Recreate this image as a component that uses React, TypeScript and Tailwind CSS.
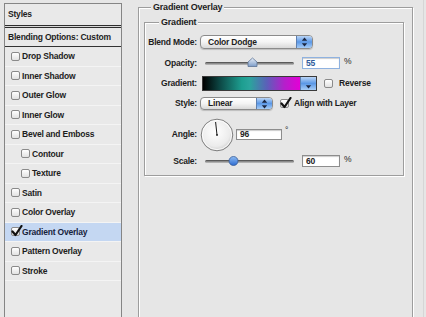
import React from 'react';

const layers: { label: string; nested?: boolean; checked?: boolean }[] = [
  { label: 'Drop Shadow' },
  { label: 'Inner Shadow' },
  { label: 'Outer Glow' },
  { label: 'Inner Glow' },
  { label: 'Bevel and Emboss' },
  { label: 'Contour', nested: true },
  { label: 'Texture', nested: true },
  { label: 'Satin' },
  { label: 'Color Overlay' },
  { label: 'Gradient Overlay', checked: true },
  { label: 'Pattern Overlay' },
  { label: 'Stroke' },
];

function CheckBox({ checked }: { checked?: boolean }) {
  return (
    <span className="relative block h-[9px] w-[9px] shrink-0 rounded-[2px] border border-[#8a8a8a] bg-gradient-to-b from-white to-[#e2e2e2]">
      {checked && (
        <svg className="absolute left-[-1px] top-[-3px]" width="12" height="12" viewBox="0 0 12 12">
          <path d="M1.5 6.5 L4.5 10 L10.5 1" fill="none" stroke="#111" strokeWidth="2.2" strokeLinecap="round" strokeLinejoin="round" />
        </svg>
      )}
    </span>
  );
}

function Stepper({ double }: { double?: boolean }) {
  return (
    <span className="flex h-full w-[16px] shrink-0 items-center justify-center border-l border-[#5d7fb0] bg-gradient-to-b from-[#b9d4f5] via-[#5b98e6] to-[#a6ccf6]">
      <svg width="7" height="10" viewBox="0 0 7 10">
        {double && <path d="M3.5 0.5 L6.2 3.8 L0.8 3.8 Z" fill="#1b2640" />}
        <path d="M0.8 6.2 L6.2 6.2 L3.5 9.5 Z" fill="#1b2640" />
      </svg>
    </span>
  );
}

function PopUp({ label, className }: { label: string; className: string }) {
  return (
    <div className={`flex items-stretch overflow-hidden rounded-[4px] border border-[#8b8b8b] bg-gradient-to-b from-white via-[#f4f4f4] to-[#d9d9d9] shadow-[0_1px_1px_rgba(0,0,0,0.18)] ${className}`}>
      <span className="flex flex-1 items-center pl-[7px] leading-none">{label}</span>
      <Stepper double />
    </div>
  );
}

function Slider({ thumbAt, round }: { thumbAt: number; round?: boolean }) {
  return (
    <div className="relative flex h-full w-[97px] shrink-0 items-center pl-[5px]">
      <div className="h-[3px] w-[89px] rounded-full border-t border-[#5a5a5a] bg-gradient-to-b from-[#7a7a7a] to-[#c4c4c4]" />
      <svg className="absolute top-[0px]" style={{ left: thumbAt }} width="11" height="11" viewBox="0 0 11 11">
        <defs>
          <linearGradient id={round ? 'tr' : 'to'} x1="0" y1="0" x2="0" y2="1">
            <stop offset="0" stopColor={round ? '#8fbdf4' : '#e6eef8'} />
            <stop offset="1" stopColor={round ? '#2c6ad0' : '#7d9cc8'} />
          </linearGradient>
        </defs>
        {round ? (
          <circle cx="5.5" cy="6" r="4.5" fill="url(#tr)" stroke="#3b5d96" strokeWidth="0.8" />
        ) : (
          <path d="M1 9.5 L1 5 L5.5 1 L10 5 L10 9.5 Z" fill="url(#to)" stroke="#5d7396" strokeWidth="0.8" />
        )}
      </svg>
    </div>
  );
}

function NumberField({ value, focus }: { value: string; focus?: boolean }) {
  return (
    <div
      className={`flex h-full w-[38px] shrink-0 items-center border bg-white pl-[3px] leading-none shadow-[inset_0_1px_1px_rgba(0,0,0,0.2)] ${
        focus ? 'border-[#8fb2e0] text-[#2f5a9a]' : 'border-[#8d8d8d]'
      }`}
    >
      {value}
    </div>
  );
}

function Label({ children }: { children: React.ReactNode }) {
  return <span className="w-[55px] shrink-0 pr-[3px] text-right leading-none">{children}</span>;
}

export default function App() {
  return (
    <div className="flex h-[317px] w-[426px] overflow-hidden bg-[#e6e6e6] font-['Liberation_Sans',Arial,sans-serif] text-[8.5px] font-bold tracking-[-0.2px] text-[#1d1d1d]">
      {/* style list */}
      <aside className="ml-[4px] mt-[3px] h-[330px] w-[118px] shrink-0 border border-[#858585] bg-[#e9e9e9]">
        <div className="flex h-[21px] items-center pl-[3px] leading-none">Styles</div>
        <div className="h-[3px] border-y border-[#2e2e2e] bg-[#d8d8d8]" />
        <div className="flex h-[19px] items-center border-b border-[#333] pl-[3px] leading-none">Blending Options: Custom</div>
        {layers.map((l) => (
          <div
            key={l.label}
            className={`flex h-[19.5px] items-center gap-[2px] border-b border-[#f4f4f4] leading-none ${
              l.nested ? 'pl-[16px]' : 'pl-[6px]'
            } ${l.checked ? 'bg-[#c4d7f2] text-[#17233d]' : ''}`}
          >
            <CheckBox checked={l.checked} />
            <span>{l.label}</span>
          </div>
        ))}
      </aside>

      {/* Gradient Overlay group */}
      <section className="relative ml-[16px] mt-[7px] h-[330px] w-[275px] shrink-0 border border-[#9d9d9d] shadow-[1px_1px_0_#fff,inset_1px_1px_0_#fff]">
        <span className="absolute left-[12px] top-[-6px] bg-[#e6e6e6] px-[2px] text-[9px] leading-[10px]">Gradient Overlay</span>

        <div className="relative ml-[5px] mt-[14px] box-border flex h-[154px] w-[260px] flex-col border border-[#9d9d9d] pt-[12px] shadow-[1px_1px_0_#fff,inset_1px_1px_0_#fff]">
          <span className="absolute left-[14px] top-[-6px] bg-[#e6e6e6] px-[2px] text-[9px] leading-[10px]">Gradient</span>

          <div className="flex h-[14px] items-center">
            <Label>Blend Mode:</Label>
            <PopUp label="Color Dodge" className="h-[14px] w-[113px]" />
          </div>

          <div className="mt-[8px] flex h-[12px] items-center">
            <Label>Opacity:</Label>
            <Slider thumbAt={47} />
            <div className="ml-[5px] h-full">
              <NumberField value="55" focus />
            </div>
            <span className="ml-[4px] self-start font-normal leading-none">%</span>
          </div>

          <div className="mt-[7px] flex h-[15px] items-center">
            <Label>Gradient:</Label>
            <div className="ml-[2px] flex h-full border border-[#3a3a3a]">
              <div className="h-full w-[97px] bg-[linear-gradient(to_right,#000_0%,#0d4a47_18%,#1d9e90_40%,#2aa59c_48%,#5c5fb9_66%,#b51fcb_84%,#e400d6_100%)]" />
              <Stepper />
            </div>
            <span className="ml-[7px]">
              <CheckBox />
            </span>
            <span className="ml-[6px] leading-none">Reverse</span>
          </div>

          <div className="mt-[6px] flex h-[13px] items-center">
            <Label>Style:</Label>
            <PopUp label="Linear" className="h-[13px] w-[73px]" />
            <span className="ml-[7px]">
              <CheckBox checked />
            </span>
            <span className="ml-[5px] leading-none">Align with Layer</span>
          </div>

          <div className="mt-[8px] flex h-[33px] items-center">
            <Label>Angle:</Label>
            <svg width="34" height="34" viewBox="0 0 34 34" className="shrink-0">
              <defs>
                <radialGradient id="dial" cx="0.45" cy="0.4" r="0.65">
                  <stop offset="0" stopColor="#ffffff" />
                  <stop offset="0.7" stopColor="#ececec" />
                  <stop offset="1" stopColor="#c8c8c8" />
                </radialGradient>
              </defs>
              <circle cx="17" cy="17" r="15.8" fill="url(#dial)" stroke="#7f7f7f" strokeWidth="1" />
              <circle cx="17" cy="17" r="14.6" fill="none" stroke="#ffffff" strokeWidth="0.8" />
              <line x1="17" y1="17" x2="15.6" y2="4" stroke="#1a1a1a" strokeWidth="1" />
              <circle cx="17" cy="17" r="0.9" fill="#1a1a1a" />
            </svg>
            <div className="ml-[2px] h-[11px]">
              <div className="flex h-full w-[46px] items-center border border-[#8d8d8d] bg-white pl-[3px] leading-none shadow-[inset_0_1px_1px_rgba(0,0,0,0.2)]">96</div>
            </div>
            <span className="ml-[3px] mt-[-8px] font-normal leading-none">°</span>
          </div>

          <div className="mt-[4px] flex h-[12px] items-center">
            <Label>Scale:</Label>
            <Slider thumbAt={28} round />
            <div className="ml-[5px] h-full">
              <NumberField value="60" />
            </div>
            <span className="ml-[4px] self-start font-normal leading-none">%</span>
          </div>
        </div>
      </section>

      <div className="ml-[10px] mt-[-4px] h-[330px] w-[1px] bg-[#d6d6d6]" />
    </div>
  );
}
